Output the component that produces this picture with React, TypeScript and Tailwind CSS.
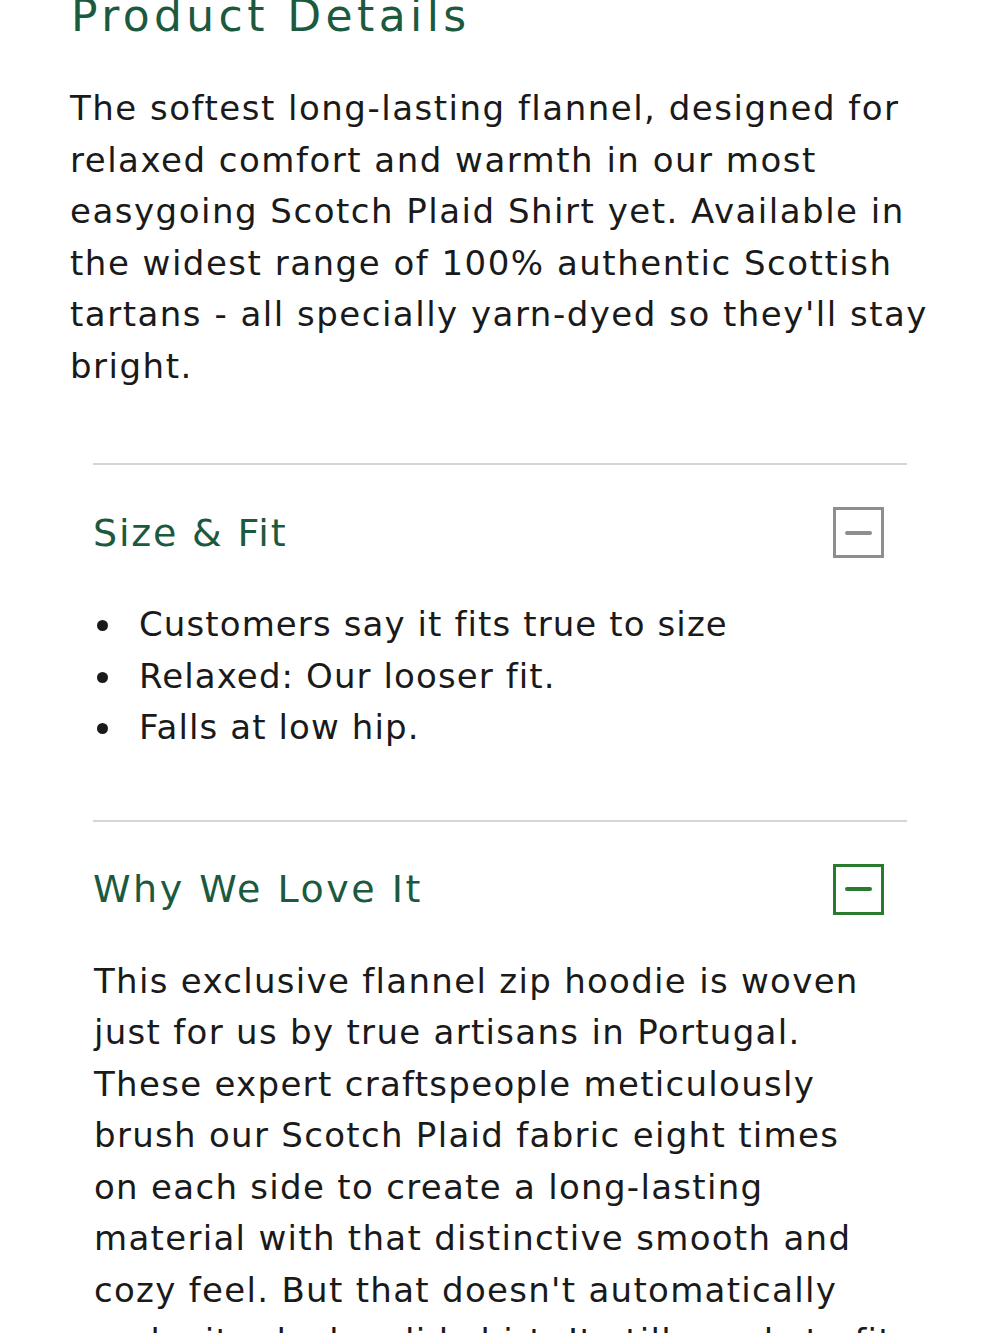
import React from "react";

const green = "text-[#1c5a40]";

function Box({ active }: { active?: boolean }) {
  return (
    <div
      className={
        "w-[51px] h-[51px] flex items-center justify-center border-[3px] " +
        (active ? "border-[#2a7a30]" : "border-[#8e8e8e]")
      }
    >
      <div className={"w-[27px] h-[4px] rounded-full " + (active ? "bg-[#2a7a30]" : "bg-[#8e8e8e]")} />
    </div>
  );
}

const p1 = [
  "The softest long-lasting flannel, designed for",
  "relaxed comfort and warmth in our most",
  "easygoing Scotch Plaid Shirt yet. Available in",
  "the widest range of 100% authentic Scottish",
  "tartans - all specially yarn-dyed so they'll stay",
  "bright.",
];

const p2 = [
  "This exclusive flannel zip hoodie is woven",
  "just for us by true artisans in Portugal.",
  "These expert craftspeople meticulously",
  "brush our Scotch Plaid fabric eight times",
  "on each side to create a long-lasting",
  "material with that distinctive smooth and",
  "cozy feel. But that doesn't automatically",
  "make it a lock-solid shirt. It still needs to fit",
];

export default function App() {
  return (
    <div
      className="w-[1000px] h-[1333px] overflow-hidden bg-white text-[#1a1a1a]"
      style={{ fontFamily: "'DejaVu Sans', sans-serif" }}
    >
      <h1 className={"mt-[-6px] ml-[71px] text-[44px] leading-[44px] font-normal tracking-[4.4px] " + green}>
        Product Details
      </h1>
      <div className="mt-[45px] ml-[70px] text-[34px] leading-[51.5px] tracking-[1.5px]">
        {p1.map((l) => (
          <div key={l} className="whitespace-nowrap">{l}</div>
        ))}
      </div>

      <div className="mx-[93px] mt-[71px] border-t-[2px] border-[#d6d6d6]" />
      <div className="mx-[93px] mt-[42px] flex items-center justify-between pr-[23px]">
        <div className={"text-[38px] leading-[50px] tracking-[1.8px] " + green}>Size &amp; Fit</div>
        <Box />
      </div>
      <ul className="ml-[97px] mt-[41px] text-[34px] leading-[51.5px] tracking-[1.1px]">
        {["Customers say it fits true to size", "Relaxed: Our looser fit.", "Falls at low hip."].map((t) => (
          <li key={t} className="flex items-center whitespace-nowrap">
            <span className="w-[11px] h-[11px] rounded-full bg-[#1a1a1a] mr-[31px] mt-[2px]" />
            {t}
          </li>
        ))}
      </ul>

      <div className="mx-[93px] mt-[66px] border-t-[2px] border-[#d6d6d6]" />
      <div className="mx-[93px] mt-[42px] flex items-center justify-between pr-[23px]">
        <div className={"text-[38px] leading-[50px] tracking-[2.5px] " + green}>Why We Love It</div>
        <Box active />
      </div>
      <div className="ml-[94px] mt-[41px] text-[34px] leading-[51.5px] tracking-[1.3px]">
        {p2.map((l) => (
          <div key={l} className="whitespace-nowrap">{l}</div>
        ))}
      </div>
    </div>
  );
}
